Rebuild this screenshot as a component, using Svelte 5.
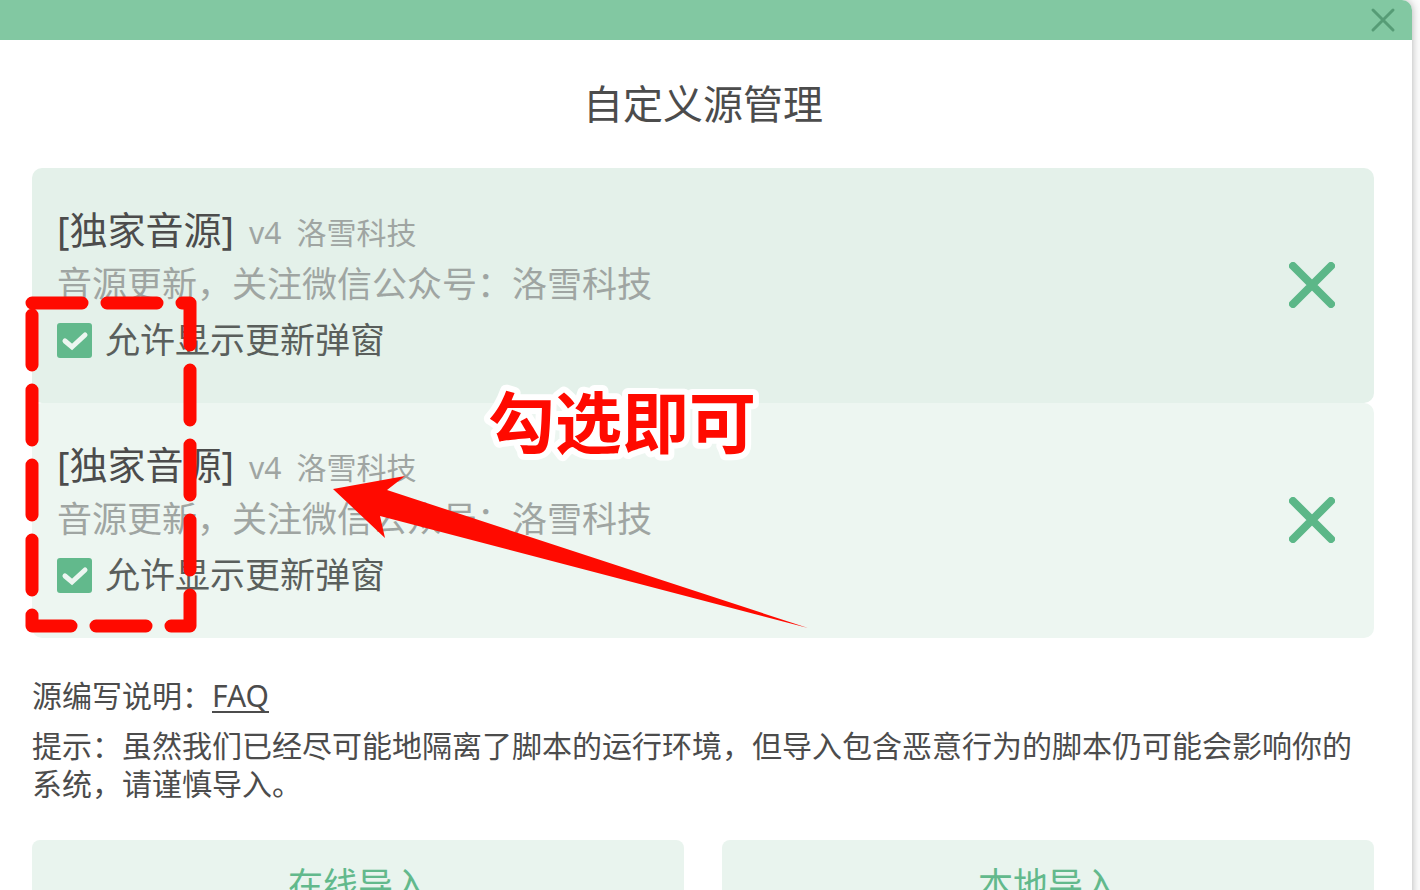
<script lang="ts">
	let sources = $state([
		{ id: 1, name: '[独家音源]', version: 'v4', author: '洛雪科技', desc: '音源更新，关注微信公众号：洛雪科技', allow: true },
		{ id: 2, name: '[独家音源]', version: 'v4', author: '洛雪科技', desc: '音源更新，关注微信公众号：洛雪科技', allow: true }
	]);
	let activeId = $state(1);

	function remove(id: number) {
		sources = sources.filter((s) => s.id !== id);
	}
</script>

<div class="page">
	<div class="dialog" role="dialog" aria-labelledby="title">
		<header>
			<button class="close" aria-label="关闭">
				<svg width="26" height="26" viewBox="0 0 26 26">
					<path d="M3 3 23 23M23 3 3 23" />
				</svg>
			</button>
		</header>

		<main>
			<h2 id="title">自定义源管理</h2>

			<ul>
				{#each sources as source (source.id)}
					<li class:active={source.id === activeId}>
						<div class="info">
							<h3>
								{source.name}
								<small>{source.version}</small>
								<small>{source.author}</small>
							</h3>
							<p>{source.desc}</p>
							<label>
								<input type="checkbox" bind:checked={source.allow} />
								<span class="box">
									<svg width="35" height="35" viewBox="0 0 35 35">
										<path d="M8 18 15 24 28 12" />
									</svg>
								</span>
								允许显示更新弹窗
							</label>
						</div>
						<button class="remove" aria-label="移除" onclick={() => remove(source.id)}>
							<svg width="46" height="46" viewBox="0 0 46 46">
								<path d="M4 4 42 42M42 4 4 42" />
							</svg>
						</button>
					</li>
				{/each}
			</ul>

			<div class="note">
				<p>源编写说明：<a href="#faq">FAQ</a></p>
				<p>提示：虽然我们已经尽可能地隔离了脚本的运行环境，但导入包含恶意行为的脚本仍可能会影响你的系统，请谨慎导入。</p>
			</div>

			<footer>
				<button>在线导入</button>
				<button>本地导入</button>
			</footer>
		</main>

		<!-- hand-drawn hints over the dialog -->
		<svg class="marks" width="840" height="660" viewBox="0 0 840 660">
			<rect x="32" y="303" width="158" height="323" />
			<path d="M333 489 405 476 387 490 808 628 380 516 385 538Z" />
			<text x="488" y="448">勾选即可</text>
		</svg>
	</div>
</div>

<style>
	:global(body) {
		margin: 0;
		background: #fcfcfc;
	}

	.page {
		height: 100vh;
		overflow: hidden;
		font-family: 'Noto Sans', 'Noto Sans CJK SC', sans-serif;
		color: #4c4c4c;
	}

	.dialog {
		position: relative;
		margin-right: 8px;
		border-top-right-radius: 10px;
		background: #fff;
		box-shadow: 0 0 8px rgba(0, 0, 0, 0.3);
	}

	header {
		display: flex;
		justify-content: flex-end;
		align-items: center;
		height: 40px;
		padding-right: 16px;
		border-top-right-radius: 10px;
		background: #82c8a2;
	}

	button {
		margin: 0;
		padding: 0;
		border: none;
		background: none;
		font-family: inherit;
		cursor: pointer;
	}

	button svg,
	.box svg {
		display: block;
		fill: none;
		stroke-linecap: round;
	}

	.close svg {
		stroke: #569c76;
		stroke-width: 3;
	}

	main {
		padding: 0 38px 38px 32px;
	}

	h2 {
		margin: 0;
		padding: 34px 0;
		font-size: 40px;
		line-height: 60px;
		font-weight: 400;
		text-align: center;
	}

	ul {
		margin: 0;
		padding: 0;
		list-style: none;
	}

	li {
		display: flex;
		align-items: center;
		justify-content: space-between;
		padding: 35px 39px 36px 25px;
		border-radius: 10px;
		background: #edf6f1;
	}

	li.active {
		background: #e4f1ea;
	}

	h3 {
		display: flex;
		align-items: baseline;
		gap: 15px;
		margin: 0;
		font-size: 38px;
		line-height: 52px;
		font-weight: 400;
	}

	small {
		font-size: 30px;
		line-height: 38px;
		color: #9fa5a2;
	}

	p {
		margin: 0;
	}

	li p {
		font-size: 35px;
		line-height: 58px;
		color: #9fa5a2;
	}

	label {
		display: flex;
		align-items: center;
		height: 54px;
		font-size: 35px;
		line-height: 54px;
		color: #5a5f5c;
		cursor: pointer;
	}

	input {
		position: absolute;
		opacity: 0;
	}

	.box {
		margin-right: 13px;
		border-radius: 3px;
		background: #62b98c;
	}

	.box svg {
		stroke: #edf6f1;
		stroke-width: 5;
		visibility: hidden;
	}

	input:checked + .box svg {
		visibility: visible;
	}

	.remove svg {
		stroke: #5cb788;
		stroke-width: 8;
	}

	.note {
		display: grid;
		gap: 12px;
		padding: 39px 0 37px;
		font-size: 30px;
		line-height: 38px;
	}

	a {
		color: inherit;
		text-underline-offset: 4px;
		text-decoration-thickness: 2px;
		text-decoration-skip-ink: none;
	}

	footer {
		display: grid;
		grid-template-columns: 1fr 1fr;
		gap: 38px;
	}

	footer button {
		height: 84px;
		border-radius: 8px;
		background: #e9f4ee;
		font-size: 35px;
		color: #62b98c;
	}

	.marks {
		position: absolute;
		top: 0;
		left: 0;
		fill: #ff0a00;
		stroke-linejoin: round;
		pointer-events: none;
	}

	.marks rect {
		fill: none;
		stroke: #ff0a00;
		stroke-width: 13;
		stroke-linecap: round;
		stroke-dasharray: 50 25;
	}

	.marks text {
		font-size: 67px;
		font-weight: 700;
		stroke: #fff;
		stroke-width: 12;
		paint-order: stroke;
	}
</style>
